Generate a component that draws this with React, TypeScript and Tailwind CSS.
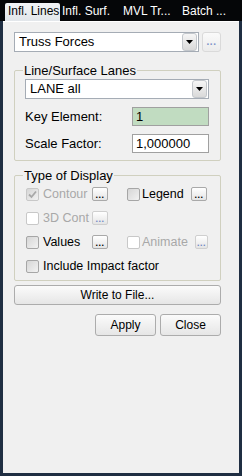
import React from "react";

// small "..." push button
function DotsButton({ blue = false, w = "w-[16px]" }: { blue?: boolean; w?: string }) {
  return (
    <div
      className={`${w} h-[14px] shrink-0 rounded-[2px] border ${
        blue ? "border-[#cfcfcf]" : "border-[#a9a9a9]"
      } bg-gradient-to-b from-white to-[#e4e4e4] flex items-end justify-center pb-[1px]`}
    >
      <span className={`text-[9px] leading-[8px] tracking-[0.5px] font-bold ${blue ? "text-[#6f86c4]" : "text-black"}`}>...</span>
    </div>
  );
}

function CheckBox({ filled = false, checked = false, dim = false }: { filled?: boolean; checked?: boolean; dim?: boolean }) {
  return (
    <div
      className={`w-[13px] h-[13px] rounded-[2px] border ${dim ? "border-[#c8c8c8]" : "border-[#a6a6a6]"} ${
        filled ? "bg-gradient-to-br from-[#d6d6d6] to-[#f2f2f2]" : "bg-white"
      } flex items-center justify-center shrink-0`}
    >
      {checked && (
        <svg width="9" height="9" viewBox="0 0 9 9">
          <path d="M1 4.5 L3.5 7 L8 1.5" fill="none" stroke="#a8a8a8" strokeWidth="1.8" />
        </svg>
      )}
    </div>
  );
}

function DropArrow() {
  return (
    <div className="w-[15px] h-[18px] rounded-[3px] border border-[#c3c7cc] bg-gradient-to-b from-[#f6f6f6] to-[#d9d9d9] flex items-center justify-center">
      <svg width="7" height="4" viewBox="0 0 7 4">
        <path d="M0 0 H7 L3.5 4 Z" fill="#000" />
      </svg>
    </div>
  );
}

const tabs = ["Infl. Surf.", "MVL Tr...", "Batch ..."];

export default function App() {
  return (
    <div className="w-[242px] h-[476px] bg-[#1f2e42] flex flex-col font-['Liberation_Sans',sans-serif] text-black overflow-hidden">
      {/* Tab strip */}
      <div className="h-[21px] bg-[#050608] flex items-end pl-[5px] shrink-0">
        <div className="w-[55px] h-[18px] bg-gradient-to-b from-[#f2f4f6] to-[#e2e6ea] rounded-t-[2px] text-[12px] leading-[16px] pl-[3px] whitespace-nowrap">
          Infl. Lines
        </div>
        <div className="flex text-white text-[12px] leading-[16px] h-[18px] whitespace-nowrap">
          <span className="ml-[2px] w-[61px]">{tabs[0]}</span>
          <span className="w-[59px]">{tabs[1]}</span>
          <span>{tabs[2]}</span>
        </div>
      </div>

      {/* Panel */}
      <div className="flex-1 mx-[3px] mb-[3px] bg-[#f0f0f0] border-t border-white pl-[11px] pt-[10px]">
        <div className="w-[207px] flex flex-col">
          {/* Result combo */}
          <div className="flex items-center gap-[3px]">
            <div className="w-[185px] h-[20px] bg-white border border-[#a5acb5] flex items-center justify-between pl-[4px] pr-[1px]">
              <span className="text-[13px]">Truss Forces</span>
              <DropArrow />
            </div>
            <div className="w-[19px] h-[20px] rounded-[3px] border border-[#dadada] bg-gradient-to-b from-[#fafafa] to-[#ececec] flex items-center justify-center">
              <span className="text-[10px] font-bold leading-[8px] text-[#7d92c9] tracking-[0.5px]">...</span>
            </div>
          </div>

          {/* Line/Surface Lanes */}
          <div className="relative mt-[18px] border border-[#d0d0bf] rounded-[2px] pt-[8px] pb-[7px] pl-[10px] pr-[11px]">
            <span className="absolute -top-[8px] left-[8px] px-[1px] bg-[#f0f0f0] text-[13px] leading-[15px]">
              Line/Surface Lanes
            </span>
            <div className="h-[20px] bg-white border border-[#a5acb5] flex items-center justify-between pl-[4px] pr-[1px]">
              <span className="text-[13px]">LANE all</span>
              <DropArrow />
            </div>
            <div className="mt-[8px] flex items-center justify-between">
              <span className="text-[13px]">Key Element:</span>
              <div className="w-[77px] h-[19px] bg-[#c1dcc1] border border-[#a0a0a0] pl-[3px] text-[13px] leading-[17px]">1</div>
            </div>
            <div className="mt-[7px] flex items-center justify-between">
              <span className="text-[13px]">Scale Factor:</span>
              <div className="w-[77px] h-[19px] bg-white border border-[#a0a0a0] pl-[3px] text-[13px] leading-[17px]">1,000000</div>
            </div>
          </div>

          {/* Type of Display */}
          <div className="relative mt-[14px] border border-[#d0d0bf] rounded-[2px] pt-[6px] pb-[2px] pl-[11px] text-[12.5px]">
            <span className="absolute -top-[8px] left-[8px] px-[1px] bg-[#f0f0f0] text-[13px] leading-[15px]">Type of Display</span>
            <div className="grid grid-cols-[101px_1fr] auto-rows-[24px] items-center">
              <div className="flex items-center">
                <CheckBox filled checked dim />
                <span className="ml-[4px] w-[49px] whitespace-nowrap text-[#a8a8a8]">Contour</span>
                <DotsButton />
              </div>
              <div className="flex items-center">
                <CheckBox filled />
                <span className="ml-[2px] w-[49px] whitespace-nowrap">Legend</span>
                <DotsButton />
              </div>

              <div className="flex items-center">
                <CheckBox dim />
                <span className="ml-[4px] w-[49px] whitespace-nowrap text-[#a8a8a8]">3D Cont</span>
                <DotsButton blue />
              </div>
              <div />

              <div className="flex items-center">
                <CheckBox filled />
                <span className="ml-[4px] w-[49px] whitespace-nowrap">Values</span>
                <DotsButton />
              </div>
              <div className="flex items-center">
                <CheckBox dim />
                <span className="ml-[2px] w-[53px] whitespace-nowrap text-[#a8a8a8]">Animate</span>
                <DotsButton blue w="w-[13px]" />
              </div>

              <div className="col-span-2 flex items-center">
                <CheckBox filled />
                <span className="ml-[4px]">Include Impact factor</span>
              </div>
            </div>
          </div>

          {/* Buttons */}
          <button className="mt-[4px] h-[20px] rounded-[3px] border border-[#acacac] bg-gradient-to-b from-[#fbfbfb] to-[#e6e6e6] text-[12px]">
            Write to File...
          </button>
          <div className="mt-[9px] flex justify-end gap-[4px]">
            <button className="w-[61px] h-[22px] rounded-[3px] border border-[#acacac] bg-gradient-to-b from-[#fbfbfb] to-[#e6e6e6] text-[12px]">
              Apply
            </button>
            <button className="w-[61px] h-[22px] rounded-[3px] border border-[#acacac] bg-gradient-to-b from-[#fbfbfb] to-[#e6e6e6] text-[12px]">
              Close
            </button>
          </div>
        </div>
      </div>
    </div>
  );
}
